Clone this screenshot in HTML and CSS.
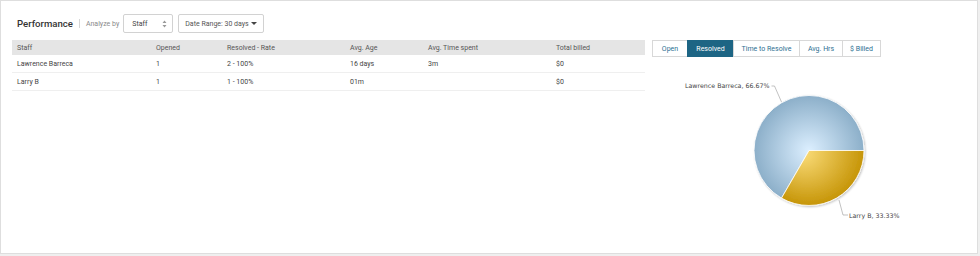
FILE: index.html
```html
<!DOCTYPE html>
<html>
<head>
<meta charset="utf-8">
<link rel="stylesheet" href="styles.css">
</head>
<body>
<div class="card">
  <div class="toolbar">
    <span class="title">Performance</span>
    <span class="sep"></span>
    <span class="analyze">Analyze by</span>
    <div class="select">
      <span>Staff</span>
      <svg class="updown" width="5" height="8" viewBox="0 0 5 8"><path d="M2.5 0.5 L4.5 3 H0.5 Z M2.5 7.5 L4.5 5 H0.5 Z" fill="#999"/></svg>
    </div>
    <div class="dropdown">
      <span>Date Range: 30 days</span>
      <svg width="6" height="3" viewBox="0 0 6 3"><path d="M0 0 H6 L3 3 Z" fill="#444"/></svg>
    </div>
  </div>
  <div class="main">
    <div class="table">
      <div class="row head">
        <span class="c1">Staff</span><span class="c2">Opened</span><span class="c3">Resolved - Rate</span><span class="c4">Avg. Age</span><span class="c5">Avg. Time spent</span><span class="c6">Total billed</span>
      </div>
      <div class="row">
        <span class="c1">Lawrence Barreca</span><span class="c2">1</span><span class="c3">2 - 100%</span><span class="c4">16 days</span><span class="c5">3m</span><span class="c6">$0</span>
      </div>
      <div class="row">
        <span class="c1">Larry B</span><span class="c2">1</span><span class="c3">1 - 100%</span><span class="c4">01m</span><span class="c5"></span><span class="c6">$0</span>
      </div>
    </div>
    <div class="chartcol">
      <div class="tabs">
        <span class="tab t1">Open</span><span class="tab active t2">Resolved</span><span class="tab t3">Time to Resolve</span><span class="tab t4">Avg. Hrs</span><span class="tab t5">$ Billed</span>
      </div>
      <div class="chart">
        <svg width="300" height="190" viewBox="0 0 300 190">
          <defs>
            <radialGradient id="gb" cx="157" cy="93.5" r="55" gradientUnits="userSpaceOnUse">
              <stop offset="0" stop-color="#dcefff"/>
              <stop offset="1" stop-color="#8cafc9"/>
            </radialGradient>
            <radialGradient id="gy" cx="157" cy="93.5" r="55" fx="150" fy="95" gradientUnits="userSpaceOnUse">
              <stop offset="0" stop-color="#fcde7c"/>
              <stop offset="1" stop-color="#c69507"/>
            </radialGradient>
            <filter id="sh" x="-20%" y="-20%" width="140%" height="140%">
              <feGaussianBlur in="SourceAlpha" stdDeviation="1.2"/>
              <feOffset dx="0.5" dy="0.5"/>
              <feComponentTransfer><feFuncA type="linear" slope="0.25"/></feComponentTransfer>
              <feMerge><feMergeNode/><feMergeNode in="SourceGraphic"/></feMerge>
            </filter>
          </defs>
          <g filter="url(#sh)" stroke="#fff" stroke-width="0.8" stroke-linejoin="round">
            <path d="M212 93.5 A55 55 0 1 0 129.5 141.1 L157 93.5 Z" fill="url(#gb)"/>
            <path d="M212 93.5 A55 55 0 0 1 129.5 141.1 L157 93.5 Z" fill="url(#gy)"/>
          </g>
          <path d="M119.5 29 H122.5 L129.5 45" fill="none" stroke="#999" stroke-width="0.6"/>
          <path d="M187 143 L191 158 H196" fill="none" stroke="#999" stroke-width="0.6"/>
          <text x="117.5" y="31" text-anchor="end" class="lbl">Lawrence Barreca, 66.67%</text>
          <text x="197" y="161" class="lbl">Larry B, 33.33%</text>
        </svg>
      </div>
    </div>
  </div>
</div>
</body>
</html>
```

FILE: styles.css
```css
html, body {
  margin: 0;
  padding: 0;
  background: #efefef;
}
body {
  width: 980px;
  height: 256px;
  font-family: Roboto, "Liberation Sans", sans-serif;
}
.card {
  width: 976px;
  height: 252px;
  background: #fff;
  border: 1px solid #dedede;
}
.toolbar {
  display: flex;
  align-items: center;
  height: 19px;
  margin-top: 13px;
  padding-left: 16px;
}
.title {
  font-size: 9.6px;
  font-weight: 500;
  color: #333;
}
.sep {
  width: 1px;
  height: 9px;
  background: #d6d6d6;
  margin: 0 6px 0 6px;
}
.analyze {
  font-size: 7px;
  color: #8a8a8a;
  margin-right: 4px;
}
.select, .dropdown {
  display: flex;
  align-items: center;
  justify-content: space-between;
  box-sizing: border-box;
  height: 19px;
  border: 1px solid #d2d2d2;
  border-radius: 2px;
  font-size: 7px;
  color: #444;
  white-space: nowrap;
}
.select {
  width: 50px;
  padding: 0 5px 0 8px;
}
.dropdown {
  width: 86px;
  margin-left: 5px;
  padding: 0 6px 0 6px;
  color: #555;
}
.main {
  display: flex;
  margin-top: 7px;
  padding-left: 11px;
}
.table {
  width: 633px;
  flex-shrink: 0;
  font-size: 7px;
  color: #444;
}
.row {
  display: flex;
  height: 17px;
  align-items: center;
  border-bottom: 1px solid #efefef;
}
.row.head {
  background: #e5e5e5;
  height: 15px;
  color: #555;
  border-bottom: none;
}
.row span { display: block; }
.c1 { width: 139px; padding-left: 5px; }
.c2 { width: 71px; }
.c3 { width: 123px; }
.c4 { width: 78px; }
.c5 { width: 128px; }
.c6 { flex: 1; }
.chartcol {
  margin-left: 7px;
  flex-shrink: 0;
}
.tabs {
  display: flex;
  height: 17px;
  box-sizing: border-box;
  border: 1px solid #d8d8d8;
  width: 229px;
}
.tab {
  display: flex;
  align-items: center;
  justify-content: center;
  font-size: 7px;
  color: #2d6f92;
  border-left: 1px solid #d8d8d8;
}
.tab.t1 { border-left: none; width: 34px; }
.tab.t2 { width: 45px; }
.tab.t3 { width: 65px; }
.tab.t4 { width: 42px; }
.tab.t5 { flex: 1; }
.tab.active {
  background: #1d6584;
  color: #fff;
  border-left-color: #1d6584;
  margin-top: -1px;
  margin-bottom: -1px;
}
.chart svg { display: block; }
.lbl {
  font-family: "DejaVu Sans", Verdana, sans-serif;
  font-size: 6.3px;
  fill: #444;
}
```
